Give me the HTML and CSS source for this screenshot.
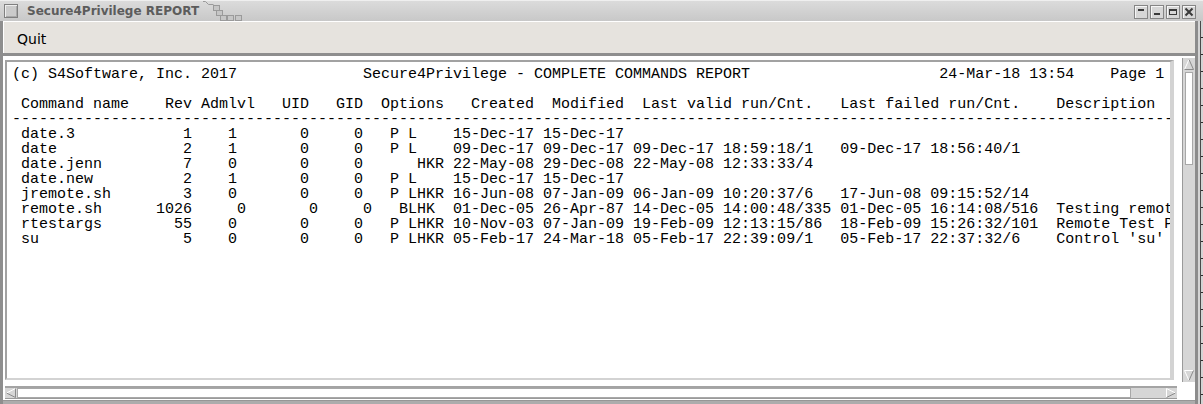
FILE: index.html
```html
<!DOCTYPE html>
<html>
<head>
<meta charset="utf-8">
<title>Secure4Privilege REPORT</title>
<link rel="stylesheet" href="styles.css">
</head>
<body>
<div class="window">
  <div class="titlebar">
    <span class="tb-icon"></span>
    <span class="tb-title">Secure4Privilege REPORT</span>
    <svg class="tb-deco" width="44" height="21" viewBox="0 0 44 21">
      <polyline points="0,1.5 2.5,1.5 5.5,4.5 10.5,4.5" fill="none" stroke="#9a9a9a" stroke-width="1"/>
      <rect x="10.5" y="5.5" width="6" height="5" fill="#c6c6c6" stroke="#9a9a9a"/>
      <rect x="13.5" y="10.5" width="6" height="5" fill="#c6c6c6" stroke="#9a9a9a"/>
      <rect x="17.5" y="15.5" width="6" height="5" fill="#c6c6c6" stroke="#9a9a9a"/>
      <rect x="24.5" y="15.5" width="6" height="5" fill="#c6c6c6" stroke="#9a9a9a"/>
      <rect x="32.5" y="15.5" width="6" height="5" fill="#c6c6c6" stroke="#9a9a9a"/>
    </svg>
    <div class="tb-buttons">
      <span class="tb-btn"><svg width="12" height="12" viewBox="0 0 12 12"><rect x="3" y="3" width="6" height="2" fill="#3a3a3a"/></svg></span>
      <span class="tb-btn"><svg width="12" height="12" viewBox="0 0 12 12"><rect x="3" y="7" width="6" height="2" fill="#3a3a3a"/></svg></span>
      <span class="tb-btn"><svg width="12" height="12" viewBox="0 0 12 12"><rect x="2.5" y="3.5" width="7" height="5" fill="none" stroke="#3a3a3a"/><rect x="2" y="3" width="8" height="2" fill="#3a3a3a"/></svg></span>
      <span class="tb-btn"><svg width="12" height="12" viewBox="0 0 12 12"><path d="M2.5 2.5 L9.5 9.5 M9.5 2.5 L2.5 9.5" stroke="#3a3a3a" stroke-width="2"/></svg></span>
    </div>
  </div>
  <div class="main">
    <div class="client">
      <div class="menubar"><span class="menu-item">Quit</span></div>
      <div class="sep"></div>
      <div class="work">
        <div class="textarea"><pre class="report">(c) S4Software, Inc. 2017              Secure4Privilege - COMPLETE COMMANDS REPORT                     24-Mar-18 13:54    Page 1

 Command name    Rev Admlvl   UID   GID  Options   Created  Modified  Last valid run/Cnt.   Last failed run/Cnt.    Description
---------------------------------------------------------------------------------------------------------------------------------
 date.3            1    1       0     0   P L    15-Dec-17 15-Dec-17
 date              2    1       0     0   P L    09-Dec-17 09-Dec-17 09-Dec-17 18:59:18/1   09-Dec-17 18:56:40/1
 date.jenn         7    0       0     0      HKR 22-May-08 29-Dec-08 22-May-08 12:33:33/4
 date.new          2    1       0     0   P L    15-Dec-17 15-Dec-17
 jremote.sh        3    0       0     0   P LHKR 16-Jun-08 07-Jan-09 06-Jan-09 10:20:37/6   17-Jun-08 09:15:52/14
 remote.sh      1026     0       0     0   BLHK  01-Dec-05 26-Apr-87 14-Dec-05 14:00:48/335 01-Dec-05 16:14:08/516  Testing remote shell
 rtestargs        55    0       0     0   P LHKR 10-Nov-03 07-Jan-09 19-Feb-09 12:13:15/86  18-Feb-09 15:26:32/101  Remote Test Program
 su                5    0       0     0   P LHKR 05-Feb-17 24-Mar-18 05-Feb-17 22:39:09/1   05-Feb-17 22:37:32/6    Control 'su'</pre></div>
        <div class="vscroll">
          <svg class="arrow-up" width="10" height="11" viewBox="0 0 10 11">
            <polygon points="5,0.5 0.5,10.5 9.5,10.5" fill="#d6d6d6"/>
            <polyline points="0.5,10.5 5,0.5" fill="none" stroke="#ffffff"/>
            <polyline points="5,0.5 9.5,10.5 0.5,10.5" fill="none" stroke="#8a8a8a"/>
          </svg>
          <div class="vthumb"></div>
          <div class="vspace"></div>
          <svg class="arrow-down" width="10" height="11" viewBox="0 0 10 11">
            <polygon points="0.5,0.5 9.5,0.5 5,10.5" fill="#d6d6d6"/>
            <polyline points="9.5,0.5 0.5,0.5 5,10.5" fill="none" stroke="#ffffff"/>
            <polyline points="9.5,0.5 5,10.5" fill="none" stroke="#8a8a8a"/>
          </svg>
        </div>
        <div class="hscroll">
          <span class="hbtn">
            <svg width="10" height="10" viewBox="0 0 10 10">
              <polygon points="0.5,5 9.5,0.5 9.5,9.5" fill="#d6d6d6"/>
              <polyline points="0.5,5 9.5,0.5" fill="none" stroke="#ffffff"/>
              <polyline points="9.5,0.5 9.5,9.5 0.5,5" fill="none" stroke="#8a8a8a"/>
            </svg>
          </span>
          <div class="hthumb"></div>
          <div class="hspace"></div>
          <span class="hbtn">
            <svg width="10" height="10" viewBox="0 0 10 10">
              <polygon points="0.5,0.5 9.5,5 0.5,9.5" fill="#d6d6d6"/>
              <polyline points="0.5,9.5 0.5,0.5 9.5,5" fill="none" stroke="#ffffff"/>
              <polyline points="9.5,5 0.5,9.5" fill="none" stroke="#8a8a8a"/>
            </svg>
          </span>
        </div>
        <div class="corner"></div>
      </div>
      <div class="bframe"></div>
    </div>
    <div class="rframe"></div>
  </div>
</div>
</body>
</html>
```

FILE: styles.css
```css
* {
  box-sizing: border-box;
}

html,
body {
  margin: 0;
  padding: 0;
}

body {
  width: 1203px;
  height: 404px;
  overflow: hidden;
  background: #c8c8c8;
  font-family: "DejaVu Sans", sans-serif;
}

.window {
  width: 1203px;
  height: 404px;
  display: flex;
  flex-direction: column;
}

/* ---------- title bar ---------- */
.titlebar {
  height: 21px;
  flex: none;
  display: flex;
  align-items: center;
  padding-left: 4px;
  background: linear-gradient(#dcdcdc, #c8c8c8);
  box-shadow: inset 0 1px #efefef;
}

.tb-icon {
  width: 14px;
  height: 14px;
  border: 1px solid #808080;
  background: #cbcbcb;
  box-shadow: inset 1px 1px #eeeeee, inset -1px -1px #a9a9a9;
}

.tb-title {
  margin-left: 9px;
  font: bold 12px "DejaVu Sans", sans-serif;
  color: #5c5c5c;
  white-space: nowrap;
}

.tb-deco {
  align-self: flex-start;
  margin-left: 4px;
}

.tb-buttons {
  margin-left: auto;
  margin-right: 7px;
  align-self: flex-start;
  margin-top: 5px;
  display: flex;
  gap: 2px;
}

.tb-btn {
  width: 14px;
  height: 14px;
  display: flex;
  border: 1px solid #858585;
  background: #d6d6d6;
  box-shadow: inset 1px 1px #f6f6f6;
}

/* ---------- main ---------- */
.main {
  flex: 1;
  display: flex;
}

.client {
  width: 1195px;
  display: flex;
  flex-direction: column;
  border-left: 3px solid #8e8e8e;
  background: #ffffff;
}

.menubar {
  height: 32px;
  flex: none;
  display: flex;
  align-items: center;
  padding: 3px 0 0 13px;
  background: #e6e3de;
  border-top: 1px solid #ffffff;
  border-left: 1px solid #ffffff;
}

.menu-item {
  font: 14px "DejaVu Sans", sans-serif;
  color: #000000;
}

.sep {
  height: 3px;
  flex: none;
  background: #8e8e8e;
}

.work {
  height: 344px;
  flex: none;
  display: grid;
  grid-template-columns: 1172px 13px;
  grid-template-rows: 324px 13px;
  column-gap: 5px;
  row-gap: 4px;
  padding: 2px 0 1px 2px;
  background: #ffffff;
}

.textarea {
  margin: 2px 3px 2px 0;
  border-style: solid;
  border-width: 2px 4px 2px 2px;
  border-color: #a2a2a2 #d3d3d3 #d3d3d3 #a2a2a2;
  background: #ffffff;
  overflow: hidden;
}

.report {
  margin: 0;
  padding: 5px 0 0 5px;
  font: 15px/15px "Liberation Mono", monospace;
  color: #000000;
  white-space: pre;
}

/* vertical scrollbar */
.vscroll {
  display: flex;
  flex-direction: column;
  align-items: center;
  border-left: 1px solid #9a9a9a;
  background: #d6d6d6;
}

.arrow-up {
  margin-top: 1px;
}

.vthumb {
  width: 8px;
  height: 93px;
  margin-top: 2px;
  background: #ffffff;
  border: 1px solid #a8a8a8;
}

.vspace {
  flex: 1;
}

.arrow-down {
  margin-bottom: 1px;
}

/* horizontal scrollbar */
.hscroll {
  display: flex;
  align-items: stretch;
  border-top: 2px solid #a4a4a4;
  border-bottom: 1px solid #9a9a9a;
  background: #d6d6d6;
}

.hbtn {
  width: 12px;
  display: flex;
  align-items: center;
  justify-content: center;
}

.hthumb {
  width: 1114px;
  background: #ffffff;
  border: 1px solid #a8a8a8;
}

.hspace {
  flex: 1;
}

.corner {
  background: #ffffff;
}

.bframe {
  flex: 1;
  background: #acacac;
  border-top: 1px solid #969696;
}

/* right window edge */
.rframe {
  width: 8px;
  border-left: 3px solid #8c8c8c;
  background:
    repeating-linear-gradient(to bottom, transparent 0 16px, #2c2c2c 16px 17px) right top / 2px 100% no-repeat,
    linear-gradient(to right, #d4d4d4 0 2px, #4a4a4a 2px 3px, #d4d4d4 3px);
}
```
